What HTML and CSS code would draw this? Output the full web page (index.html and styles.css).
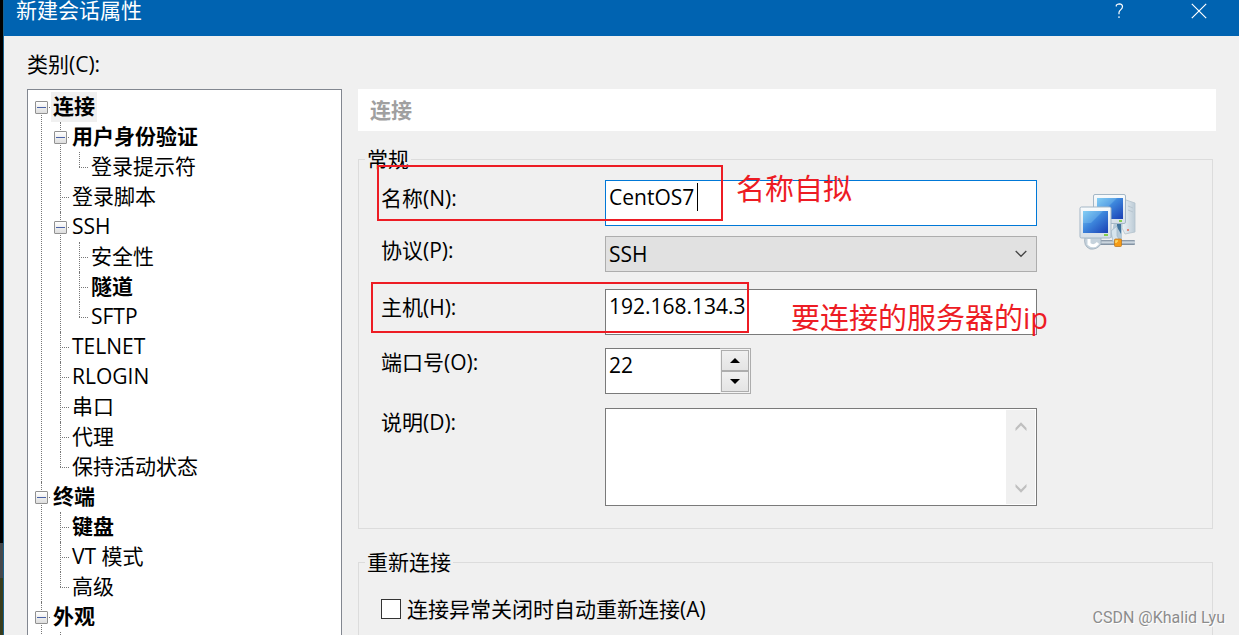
FILE: index.html
```html
<!DOCTYPE html>
<html lang="zh-CN">
<head>
<meta charset="utf-8">
<title>新建会话属性</title>
<link rel="stylesheet" href="styles.css">
</head>
<body>
<div class="desktop" aria-hidden="true">
  <div class="desktop-window"></div>
  <div class="desktop-taskbar"></div>
  <div class="desktop-wallpaper"></div>
</div>
<main class="dialog">
  <header class="titlebar">
    <h1 class="title">新建会话属性</h1>
    <button class="title-button" type="button" aria-label="帮助">
      <svg width="9" height="16" viewBox="0 0 9 16" fill="none" stroke="#fff" stroke-width="1.2"><path d="M1.3 3.4V2.2Q2.5 .8 4.3 .8Q7.5 .9 7.5 3.6Q7.5 5.3 5.6 6.9Q4 8.3 4 9.6V11.2M4 13.2V15"/></svg>
    </button>
    <button class="title-button" type="button" aria-label="关闭">
      <svg width="16" height="16" viewBox="0 0 16 16" fill="none" stroke="#fff" stroke-width="1.2"><path d="M.8 .8L15.2 15.2M15.2 .8L.8 15.2"/></svg>
    </button>
  </header>
  <div class="content">
    <div class="tree-label">类别(C):</div>
    <div class="columns">
      <nav class="tree-box">
        <ul class="tree">
          <li class="root first"><div class="node"><button class="toggle" type="button" aria-label="折叠"></button><span class="name strong selected">连接</span></div>
            <ul>
              <li><div class="node"><button class="toggle" type="button" aria-label="折叠"></button><span class="name strong">用户身份验证</span></div>
                <ul><li><div class="node"><span class="name">登录提示符</span></div></li></ul>
              </li>
              <li><div class="node"><span class="name">登录脚本</span></div></li>
              <li><div class="node"><button class="toggle" type="button" aria-label="折叠"></button><span class="name">SSH</span></div>
                <ul>
                  <li><div class="node"><span class="name">安全性</span></div></li>
                  <li><div class="node"><span class="name strong">隧道</span></div></li>
                  <li><div class="node"><span class="name">SFTP</span></div></li>
                </ul>
              </li>
              <li><div class="node"><span class="name">TELNET</span></div></li>
              <li><div class="node"><span class="name">RLOGIN</span></div></li>
              <li><div class="node"><span class="name">串口</span></div></li>
              <li><div class="node"><span class="name">代理</span></div></li>
              <li><div class="node"><span class="name">保持活动状态</span></div></li>
            </ul>
          </li>
          <li class="root"><div class="node"><button class="toggle" type="button" aria-label="折叠"></button><span class="name strong">终端</span></div>
            <ul>
              <li><div class="node"><span class="name strong">键盘</span></div></li>
              <li><div class="node"><span class="name">VT 模式</span></div></li>
              <li><div class="node"><span class="name">高级</span></div></li>
            </ul>
          </li>
          <li class="root"><div class="node"><button class="toggle" type="button" aria-label="折叠"></button><span class="name strong">外观</span></div>
            <ul><li><div class="node"></div></li></ul>
          </li>
        </ul>
      </nav>
      <form class="panel">
        <h2 class="panel-title">连接</h2>
        <fieldset class="group">
          <legend>常规</legend>
          <div class="general">
            <div class="fields">
              <div class="field field-name">
                <label class="low" for="name">名称(N):</label>
                <div class="control">
                  <input class="text focused" id="name" type="text" value="CentOS7">
                  <span class="caret"></span>
                </div>
              </div>
              <div class="field field-protocol">
                <label for="protocol">协议(P):</label>
                <div class="control">
                  <select class="combo" id="protocol"><option>SSH</option></select>
                  <svg class="combo-arrow" width="12" height="8" viewBox="0 0 12 8" fill="none" stroke="#444" stroke-width="1.3"><path d="M.7 1L6 6.3L11.3 1"/></svg>
                </div>
              </div>
              <div class="field field-host">
                <label class="low" for="host">主机(H):</label>
                <div class="control"><input class="text" id="host" type="text" value="192.168.134.3"></div>
              </div>
              <div class="field field-port">
                <label for="port">端口号(O):</label>
                <div class="control spin">
                  <input class="text spin-text" id="port" type="text" value="22">
                  <div class="spin-buttons">
                    <button type="button" aria-label="增加"><svg width="10" height="5" viewBox="0 0 10 5"><path d="M0 5L5 0L10 5Z"/></svg></button>
                    <button type="button" aria-label="减少"><svg width="10" height="5" viewBox="0 0 10 5"><path d="M0 0L5 5L10 0Z"/></svg></button>
                  </div>
                </div>
              </div>
              <div class="field">
                <label for="note">说明(D):</label>
                <div class="control memo">
                  <textarea id="note"></textarea>
                  <div class="scroll">
                    <button type="button" aria-label="向上滚动"><svg width="12" height="9" viewBox="0 0 12 9"><path fill="#bfbfbf" d="M.5 6L6 .3L11.5 6V9L6 3.6L.5 9Z"/></svg></button>
                    <button type="button" aria-label="向下滚动"><svg width="12" height="9" viewBox="0 0 12 9"><path fill="#bfbfbf" d="M.5 3L6 8.7L11.5 3V0L6 5.4L.5 0Z"/></svg></button>
                  </div>
                </div>
              </div>
            </div>
            <svg class="session-icon" width="58" height="58" viewBox="0 0 58 58">
              <defs>
                <linearGradient id="screen" x1="0" y1="0" x2="1" y2="1"><stop offset="0" stop-color="#7cc9f2"/><stop offset=".45" stop-color="#3d86dc"/><stop offset="1" stop-color="#1a3fb4"/></linearGradient>
                <linearGradient id="frame" x1="0" y1="0" x2="0" y2="1"><stop offset="0" stop-color="#f8fbfd"/><stop offset="1" stop-color="#d5dfe7"/></linearGradient>
                <linearGradient id="tower" x1="0" y1="0" x2="1" y2="0"><stop offset="0" stop-color="#edf3f7"/><stop offset="1" stop-color="#bccbd6"/></linearGradient>
                <linearGradient id="pipe" x1="0" y1="0" x2="0" y2="1"><stop offset="0" stop-color="#79899a"/><stop offset=".45" stop-color="#d4dee6"/><stop offset="1" stop-color="#718294"/></linearGradient>
              </defs>
              <path d="M44 6L56 10V39L46 41L43 35Z" fill="url(#tower)" stroke="#b3c1cc" stroke-width=".8"/>
              <path d="M49 13L54 15M49 17L54 19" stroke="#b7c5d0"/>
              <circle cx="49" cy="37" r="1" fill="#e46a55"/>
              <path d="M35 29H43V48H36L32 44Z" fill="#b4c9d8"/>
              <path d="M38 29H42V41L38 34Z" fill="#40739c"/>
              <rect x="14.500" y="1.500" width="32" height="29" rx="1.500" fill="url(#frame)" stroke="#a4b7c6"/>
              <rect x="18" y="5" width="26" height="21" fill="url(#screen)"/>
              <path d="M18 5H38L28 15H18Z" fill="#9ce1fa" opacity=".25"/>
              <rect x="40" y="27" width="3" height="2" fill="#84ce4d"/>
              <rect x="20" y="47" width="36" height="5" rx="1" fill="url(#pipe)"/>
              <path d="M32 38L38 33V43L42 49H34Z" fill="#d6e4ed" stroke="#a2b8c7" stroke-width=".7"/>
              <path d="M6 44H22V51Q18 57 11 56Q4 53 6 44Z" fill="#c5d2dc" stroke="#9aabb9" stroke-width=".8"/>
              <path d="M10 46V51Q15 55 19 50" fill="none" stroke="#fff" stroke-width="3"/>
              <rect x="1" y="14" width="31" height="31" rx="1.500" fill="url(#frame)" stroke="#a4b7c6"/>
              <rect x="4" y="18" width="25" height="22" fill="url(#screen)"/>
              <path d="M4 18H24L12 30H4Z" fill="#9ce1fa" opacity=".25"/>
              <rect x="25" y="41" width="4" height="2" fill="#84ce4d"/>
              <rect x="35.500" y="46" width="7" height="7.500" rx="1" fill="#f59b16" stroke="#bd7922" stroke-width=".8"/>
              <path d="M37 50V48H39" fill="none" stroke="#ffda66" stroke-width="1.5"/>
            </svg>
          </div>
        </fieldset>
        <fieldset class="group group-reconnect">
          <legend>重新连接</legend>
          <div class="check">
            <input id="reconnect" type="checkbox">
            <label for="reconnect">连接异常关闭时自动重新连接(A)</label>
          </div>
        </fieldset>
      </form>
    </div>
  </div>
</main>
<div class="mark mark-name"></div>
<div class="mark mark-host"></div>
<div class="note note-name">名称自拟</div>
<div class="note note-host">要连接的服务器的ip</div>
<div class="watermark">CSDN @Khalid Lyu</div>
</body>
</html>
```
FILE: styles.css
```css
* { box-sizing: border-box; }

body {
  margin: 0;
  display: flex;
  height: 100vh;
  overflow: hidden;
  position: relative;
  background: #f0f0f0;
  color: #000;
  font: 21px/30px "Open Sans", "Noto Sans CJK SC", sans-serif;
}

button, input, select, textarea {
  margin: 0;
  padding: 0;
  border: 0;
  border-radius: 0;
  background: none;
  color: inherit;
  font: inherit;
  appearance: none;
  outline: none;
}

h1, h2, ul { margin: 0; padding: 0; font-size: inherit; list-style: none; }
svg { display: block; }

/* Sliver of the desktop behind the dialog */
.desktop { width: 3px; display: flex; flex-direction: column; background: #000; }
.desktop-window { flex: 1; }
.desktop-taskbar { height: 35px; background: #45474a; }
.desktop-wallpaper { height: 57px; background: #393c1c; }

.dialog {
  flex: 1;
  min-width: 0;
  display: flex;
  flex-direction: column;
  border-left: 1px solid #19628f;
}

.titlebar {
  flex: none;
  display: flex;
  align-items: flex-start;
  height: 36px;
  padding-left: 12px;
  background: #0063b1;
  color: #fff;
}
.title { flex: 1; font-weight: 400; line-height: 20px; }
.title-button { width: 80px; height: 22px; display: grid; place-items: center; }

.content { flex: 1; min-height: 0; display: flex; flex-direction: column; padding: 13px 23px 0; }
.tree-label { flex: none; margin-bottom: 10px; }
.columns { flex: 1; min-height: 0; display: grid; grid-template-columns: 315px minmax(0, 1fr); grid-template-rows: minmax(0, 1fr); gap: 16px; }

.tree-box { overflow: hidden; padding: 2px 7px 0; background: #fff; border: 1px solid #828790; border-bottom: 0; }
.tree ul { margin-left: 19px; }
.tree li { position: relative; }
.tree li::before { content: ""; position: absolute; left: 6px; top: 0; bottom: 0; border-left: 1px dotted #777; }
.tree li li:last-child::before { bottom: auto; height: 15px; }
.tree .first::before { top: 15px; }
.tree li::after { content: ""; position: absolute; left: 6px; top: 15px; width: 9px; border-top: 1px dotted #777; }
.node { display: flex; align-items: center; height: 30px; padding-left: 16px; }
.toggle {
  position: relative;
  z-index: 1;
  width: 13px;
  height: 13px;
  margin: 1px 3px 0 -16px;
  display: grid;
  place-items: center;
  border: 1px solid #919191;
  border-radius: 1px;
  background: linear-gradient(#fff, #dedede);
}
.toggle::before { content: ""; width: 9px; height: 1px; background: #4b63a7; }
.name { padding: 0 2px 2px; line-height: 28px; }
.strong { font-weight: 700; }
.selected { background: #f0f0f0; }

.panel { min-width: 0; min-height: 0; display: flex; flex-direction: column; }
.panel-title { padding: 6px 12px; background: #fff; color: #a0a0a0; }
.group { min-width: 0; margin: 13px 3px 0 0; padding: 6px 75px 22px 22px; border: 1px solid #dcdcdc; }
.group legend { margin-left: -16px; padding: 0 2px; }
.group-reconnect { flex: 1; margin-top: 18px; padding-top: 17px; padding-bottom: 0; border-bottom: 0; }

.general { display: flex; align-items: flex-start; gap: 42px; }
.fields { flex: 1; min-width: 0; }
.session-icon { flex: none; margin-top: 13px; }
.field { display: grid; grid-template-columns: 224px minmax(0, 1fr); align-items: start; }
.field label { line-height: 28px; }
.field-name { margin-bottom: 10px; }
.field-protocol { margin-bottom: 17px; }
.field-host { margin-bottom: 13px; }
.field-port { margin-bottom: 14px; }
.low { padding-top: 4px; }
.control { position: relative; }

.text { display: block; width: 100%; height: 46px; padding: 0 3px 12px; border: 1px solid #7a7a7a; background: #fff; }
.focused { border-color: #0078d7; }
.caret { position: absolute; left: 92px; top: 3px; width: 1px; height: 28px; background: #000; }
.combo { display: block; width: 100%; height: 36px; padding: 0 3px; border: 1px solid #adadad; background: #e1e1e1; }
.combo-arrow { position: absolute; right: 10px; top: 14px; pointer-events: none; }

.spin { display: flex; width: 146px; }
.spin-text { flex: 1; min-width: 0; border-right: 0; }
.spin-buttons { width: 31px; display: flex; flex-direction: column; padding: 1px; border: 1px solid #adadad; border-left: 0; background: #f4f4f4; }
.spin-buttons button { flex: 1; display: grid; place-items: center; border: 1px solid #adadad; background: linear-gradient(#f0f0f0, #e4e4e4); }

.memo { display: flex; height: 98px; padding: 1px; border: 1px solid #7a7a7a; background: #fff; }
.memo textarea { flex: 1; min-width: 0; resize: none; }
.scroll { width: 29px; display: flex; flex-direction: column; justify-content: space-between; background: #f0f0f0; }
.scroll button { height: 32px; display: grid; place-items: center; }

.check { display: flex; align-items: center; gap: 6px; }
.check input { flex: none; width: 20px; height: 20px; border: 1px solid #333; background: #fff; }

/* Red annotations drawn over the dialog */
.mark { position: absolute; border: 2px solid #ed1c24; pointer-events: none; }
.mark-name { left: 377px; top: 165px; width: 346px; height: 56px; }
.mark-host { left: 371px; top: 282px; width: 378px; height: 51px; }
.note { position: absolute; color: #ed1c24; font-size: 29px; line-height: 40px; white-space: nowrap; }
.note-name { left: 736px; top: 169px; }
.note-host { left: 791px; top: 298px; }

.watermark {
  position: absolute;
  right: 14px;
  bottom: 7px;
  color: #8c8c8c;
  font: 16px/20px Roboto, sans-serif;
  text-shadow: 1px 1px 0 #fff;
}
```
